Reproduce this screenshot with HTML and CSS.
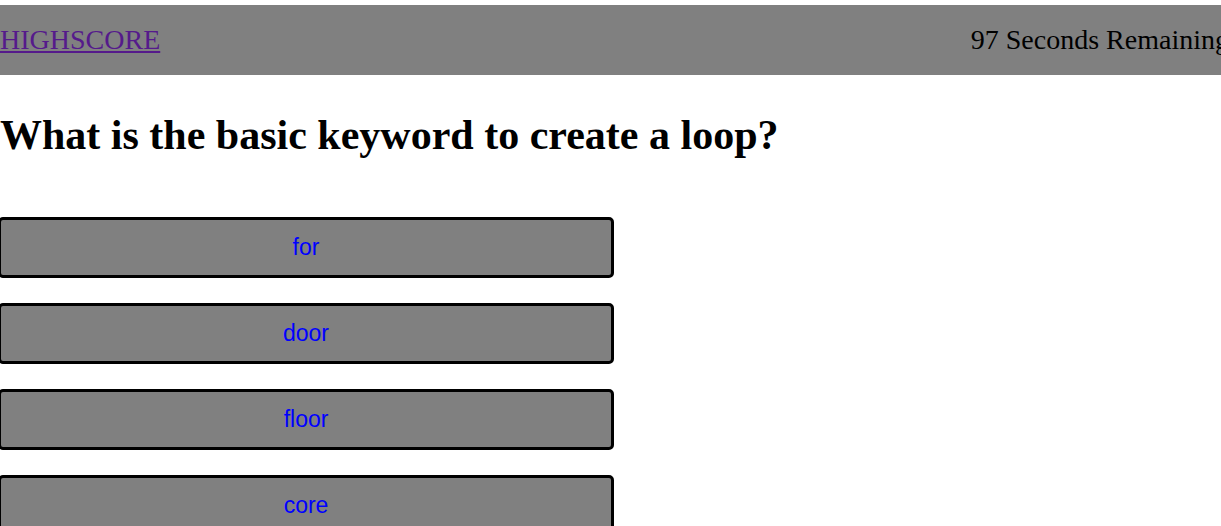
FILE: index.html
```html
<!DOCTYPE html>
<html>
<head>
<meta charset="utf-8">
<link rel="stylesheet" href="styles.css">
</head>
<body>
<header class="topbar">
  <a class="highscore" href="#">HIGHSCORE</a>
  <span class="timer">97 Seconds Remaining</span>
</header>
<main class="quiz">
  <h1 class="question">What is the basic keyword to create a loop?</h1>
  <div class="answers">
    <button class="answer">for</button>
    <button class="answer">door</button>
    <button class="answer">floor</button>
    <button class="answer">core</button>
  </div>
</main>
</body>
</html>
```

FILE: styles.css
```css
html, body {
  margin: 0;
  padding: 0;
  background: #fff;
  font-family: "Liberation Serif", "Times New Roman", serif;
  overflow: hidden;
}
body {
  padding-top: 5px;
}
.topbar {
  display: flex;
  justify-content: space-between;
  align-items: center;
  height: 70px;
  background: #808080;
  font-size: 28px;
}
.highscore {
  color: #551a8b;
  text-decoration: underline;
}
.timer {
  color: #000;
  margin-right: -8px;
  white-space: nowrap;
}
.question {
  margin: 36px 0 0 0;
  font-size: 42px;
  font-weight: bold;
  line-height: 48px;
}
.answers {
  display: flex;
  flex-direction: column;
  align-items: flex-start;
  gap: 25px;
  margin-top: 58px;
  margin-left: -2px;
}
.answer {
  width: 616px;
  height: 61px;
  background: #808080;
  border: 3px solid #000;
  border-radius: 5px;
  color: #0000ff;
  font-family: "Liberation Sans", Arial, sans-serif;
  font-size: 23px;
  padding: 0;
  margin: 0;
}
```
